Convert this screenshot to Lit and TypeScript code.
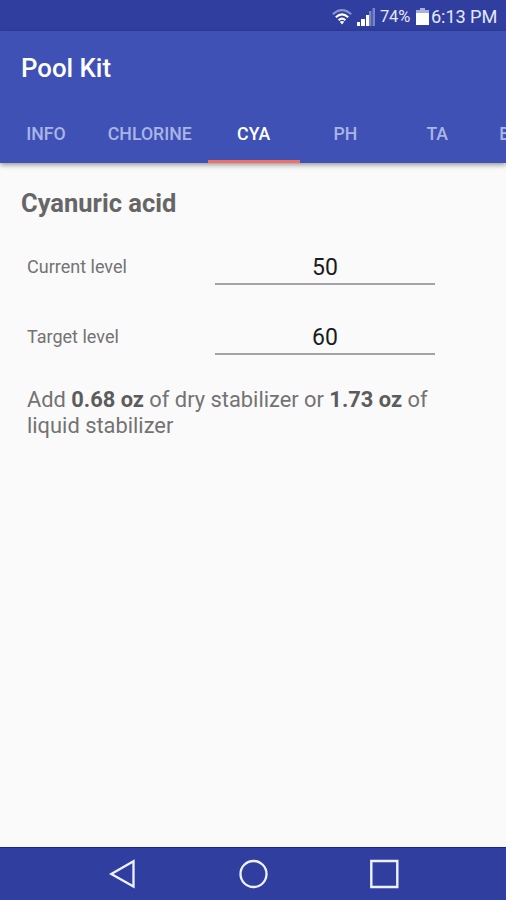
import { LitElement, html, css } from "lit";
import { customElement, state } from "lit/decorators.js";
import { classMap } from "lit/directives/class-map.js";

@customElement("app-root")
export class AppRoot extends LitElement {
  @state() private active = "CYA";
  private tabs = ["INFO", "CHLORINE", "CYA", "PH", "TA", "BORATE"];
  private fields = [
    { label: "Current level", value: "50" },
    { label: "Target level", value: "60" },
  ];

  static styles = css`
    :host {
      display: flex;
      flex-direction: column;
      width: 506px;
      height: 900px;
      overflow: hidden;
      background: #fafafa;
      font-family: Roboto, "Liberation Sans", sans-serif;
      color: #737373;
    }
    * { box-sizing: border-box; }
    svg { display: block; flex: none; }
    .status {
      height: 31px;
      flex: none;
      display: flex;
      align-items: center;
      padding: 2px 9px 0 0;
      justify-content: flex-end;
      background: #303f9f;
      color: #e4e7fa;
      white-space: nowrap;
    }
    .wifi { margin-right: 5px; }
    .percent { font-size: 16.5px; width: 31px; margin: 0 5px 0 5px; letter-spacing: -0.2px; }
    .clock { font-size: 18.2px; width: 66px; margin-left: 2px; letter-spacing: -0.1px; }
    .bar {
      height: 132px;
      flex: none;
      display: flex;
      flex-direction: column;
      background: #3f51b5;
      box-shadow: 0 2px 5px rgba(0, 0, 0, 0.4);
    }
    .title {
      height: 74px;
      line-height: 75px;
      padding-left: 21px;
      font-size: 25.8px;
      font-weight: 500;
      color: #fff;
    }
    .tabs { display: flex; height: 58px; overflow: hidden; }
    .tab {
      flex: none;
      min-width: 91.8px;
      padding: 0 16px;
      line-height: 58px;
      text-align: center;
      font-size: 17.7px;
      font-weight: 500;
      color: #a9b5e4;
      border-bottom: 3px solid transparent;
    }
    .tab.active { color: #fff; border-color: #ec6f68; }
    main { flex: 1; padding: 0 21px; }
    h1 { margin: 22px 0 0; font-size: 25.5px; line-height: 37px; font-weight: 700; color: #666; }
    .row { display: flex; height: 70px; padding-left: 6px; }
    .rows { padding-top: 10px; }
    .label { width: 188px; line-height: 70px; font-size: 18px; }
    .value {
      width: 220px;
      height: 53px;
      padding-top: 17px;
      line-height: 37px;
      text-align: center;
      font-size: 23px;
      color: #1c1c1c;
      border-bottom: 2px solid #a4a4a4;
    }
    .advice { margin: 15px 0 0 6px; font-size: 21.85px; line-height: 26px; }
    .advice b { color: #5c5c5c; }
    nav {
      height: 53px;
      flex: none;
      display: flex;
      background: #303f9f;
      border-top: 1px solid #1522a0;
      justify-content: center;
      align-items: center;
      gap: 101px;
    }
  `;

  render() {
    return html`
      <div class="status">
        <svg class="wifi" width="20" height="16" viewBox="0 0 20 16" fill="none" stroke-width="2">
          <path d="M.8 5.2Q10-3 19.2 5.2" stroke="#8994d0" />
          <path d="M3.8 8.3Q10 2.5 16.2 8.3M6.6 11.3Q10 8 13.4 11.3" stroke="#fff" />
          <path d="M7.8 12.8Q10 11 12.2 12.8L10 15.4Z" fill="#fff" />
        </svg>
        <svg width="18" height="18" viewBox="0 0 18 18">
          <path d="M0 14h3v4H0zM4 11h4v7H4zM9 7h3v11H9z" fill="#fff" />
          <path d="M12 3h2.5v15H12zM15.5 0H18v18h-2.5z" fill="#7984c7" />
        </svg>
        <span class="percent">74%</span>
        <svg width="13" height="17" viewBox="0 0 13 17">
          <path d="M4 0h5v2h4v4H0V2h4z" fill="#a8b0dc" />
          <path d="M0 5h13v12H0z" fill="#fff" />
        </svg>
        <span class="clock">6:13 PM</span>
      </div>
      <header class="bar">
        <div class="title">Pool Kit</div>
        <div class="tabs">
          ${this.tabs.map(
            (t) => html`<div
              class=${classMap({ tab: true, active: t === this.active })}
              @click=${() => (this.active = t)}
            >${t}</div>`
          )}
        </div>
      </header>
      <main>
        <h1>Cyanuric acid</h1>
        <div class="rows">
          ${this.fields.map(
            (f) => html`<div class="row">
              <div class="label">${f.label}</div>
              <div class="value">${f.value}</div>
            </div>`
          )}
        </div>
        <p class="advice">
          Add <b>0.68 oz</b> of dry stabilizer or <b>1.73 oz</b> of<br />liquid stabilizer
        </p>
      </main>
      <nav>
        <svg width="30" height="30" viewBox="0 0 30 30" fill="none" stroke="#eef1ff" stroke-width="2.3">
          <path d="M26.5 2.2v25.4L4.3 14.9z" />
        </svg>
        <svg width="30" height="30" viewBox="0 0 30 30" fill="none" stroke="#eef1ff" stroke-width="2.3">
          <circle cx="15.5" cy="15" r="13" />
        </svg>
        <svg width="30" height="30" viewBox="0 0 30 30" fill="none" stroke="#eef1ff" stroke-width="2.4">
          <path d="M2.3 2h26v26h-26z" />
        </svg>
      </nav>
    `;
  }
}
